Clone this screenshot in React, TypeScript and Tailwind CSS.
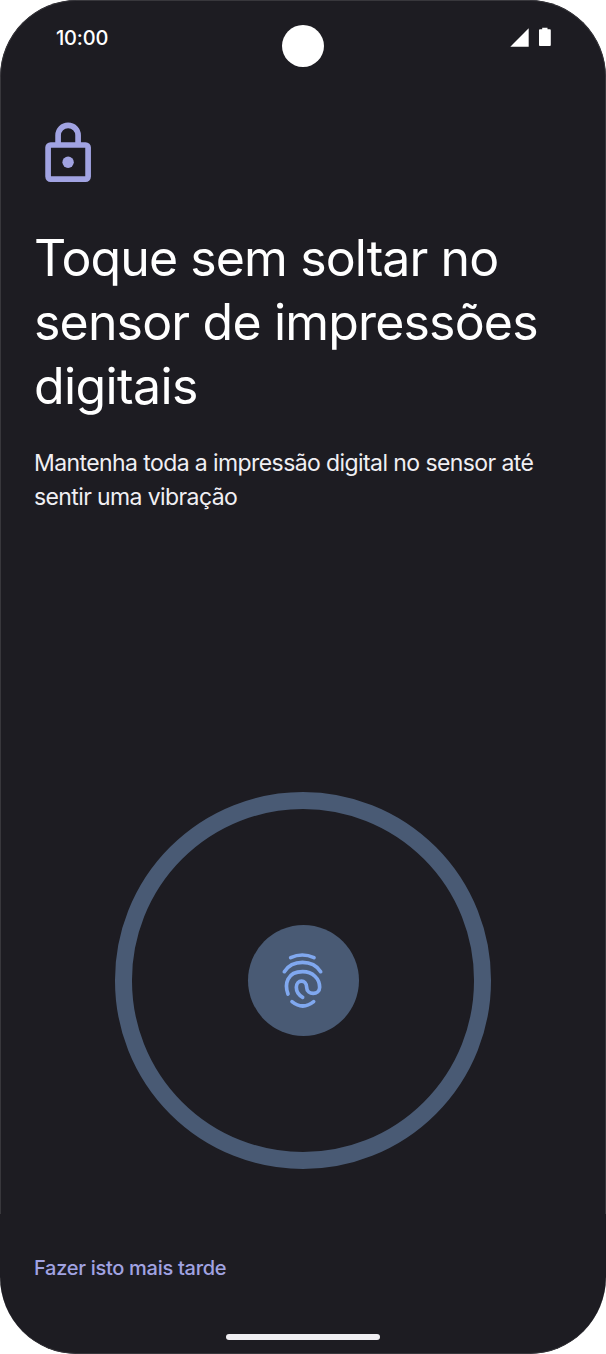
import type { ReactNode } from "react"

function StatusBar() {
  return (
    <header className="grid h-[91px] grid-cols-[1fr_42px_1fr] pt-6 text-white">
      <span className="pl-[55px] pt-px text-[20px] leading-6 font-medium tracking-[-0.2px]">10:00</span>
      <span className="size-[42px] rounded-full bg-white" />
      <div className="flex items-start justify-end gap-[10px] pr-[54px] pt-[2px]">
        <svg className="mt-px h-[19px] w-[19px]" viewBox="0 0 19 19" fill="currentColor">
          <path d="M18.700 .3v18.400H.3z" />
        </svg>
        <svg className="h-5 w-3" viewBox="0 0 12 20" fill="currentColor">
          <path d="M3.2.7h5.3v1.5h2.1c.8 0 1.2.4 1.2 1.2v14.4c0 .8-.4 1.2-1.2 1.2H1.2C.4 19 0 18.600 0 17.800V3.400c0-.8.4-1.200 1.200-1.200h2z" />
        </svg>
      </div>
    </header>
  )
}

function LockIcon() {
  return (
    <svg className="h-[62px] w-[48px]" viewBox="0 0 48 62" fill="none" stroke="#a1a3e2" strokeWidth="5.700">
      <rect x="4.100" y="25" width="40" height="34.100" rx="2.500" />
      <path d="M14.100 25v-9.700a10 10 0 0 1 20 0V25" />
      <circle cx="24.100" cy="42.200" r="5.700" fill="#a1a3e2" stroke="none" />
    </svg>
  )
}

function FingerprintIcon() {
  return (
    <svg
      className="h-[70px] w-[66px]"
      viewBox="0 3 198 210"
      fill="none"
      stroke="#80a8ef"
      strokeWidth="11"
      strokeLinecap="round"
    >
      <path d="M62 38Q97 22 132 38" />
      <path d="M43 80C67 43 128 43 152 80" />
      <path d="M54 147C43 117 51 80 98 80C128 80 149 101 149 127C149 151 110 151 110 127C110 102 79 102 79 127C79 141 87 151 98 157" />
      <path d="M66 170Q98 196 131 170" />
    </svg>
  )
}

function Line({ className, children }: { className: string; children: ReactNode }) {
  return <span className={`block whitespace-nowrap ${className}`}>{children}</span>
}

export default function App() {
  return (
    <div className="flex h-[1354px] w-[606px] flex-col overflow-hidden rounded-[77px] bg-[#1d1c22] font-['Inter',sans-serif]">
      <main className="flex h-[1214px] flex-col rounded-t-[77px] border-x border-t border-[#38373c]">
        <StatusBar />

        <section className="px-[33px] pt-[28px]">
          <div className="pl-[10px]">
            <LockIcon />
          </div>
          <h1 className="mt-[44px] text-[50px] leading-16 font-normal text-white">
            <Line className="tracking-[-0.9px]">Toque sem soltar no</Line>
            <Line className="tracking-[-0.82px]">sensor de impressões</Line>
            <Line className="tracking-[-0.6px]">digitais</Line>
          </h1>
          <p className="mt-[28px] text-[23px] leading-[34px] text-[#f0eff3]">
            <Line className="tracking-[-0.59px]">Mantenha toda a impressão digital no sensor até</Line>
            <Line className="tracking-[-0.61px]">sentir uma vibração</Line>
          </p>
        </section>

        {/* Sensor target */}
        <div className="mx-auto mt-auto mb-[45px] flex h-[377px] w-[376px] items-center justify-center rounded-full border-[17px] border-[#495a74]">
          <div className="flex size-[111px] items-center justify-center rounded-full bg-[#495a74]">
            <FingerprintIcon />
          </div>
        </div>
      </main>

      <footer className="flex flex-1 flex-col items-center rounded-b-[77px] border-b border-[#38373c]">
        <button className="mt-[40px] self-start pl-[34px] text-[20px] leading-7 font-medium text-[#a1a3e2]">
          <Line className="tracking-[-0.28px]">Fazer isto mais tarde</Line>
        </button>
        <div className="mt-[52px] h-[6px] w-[154px] rounded-full bg-[#f0eff3]" />
      </footer>
    </div>
  )
}
